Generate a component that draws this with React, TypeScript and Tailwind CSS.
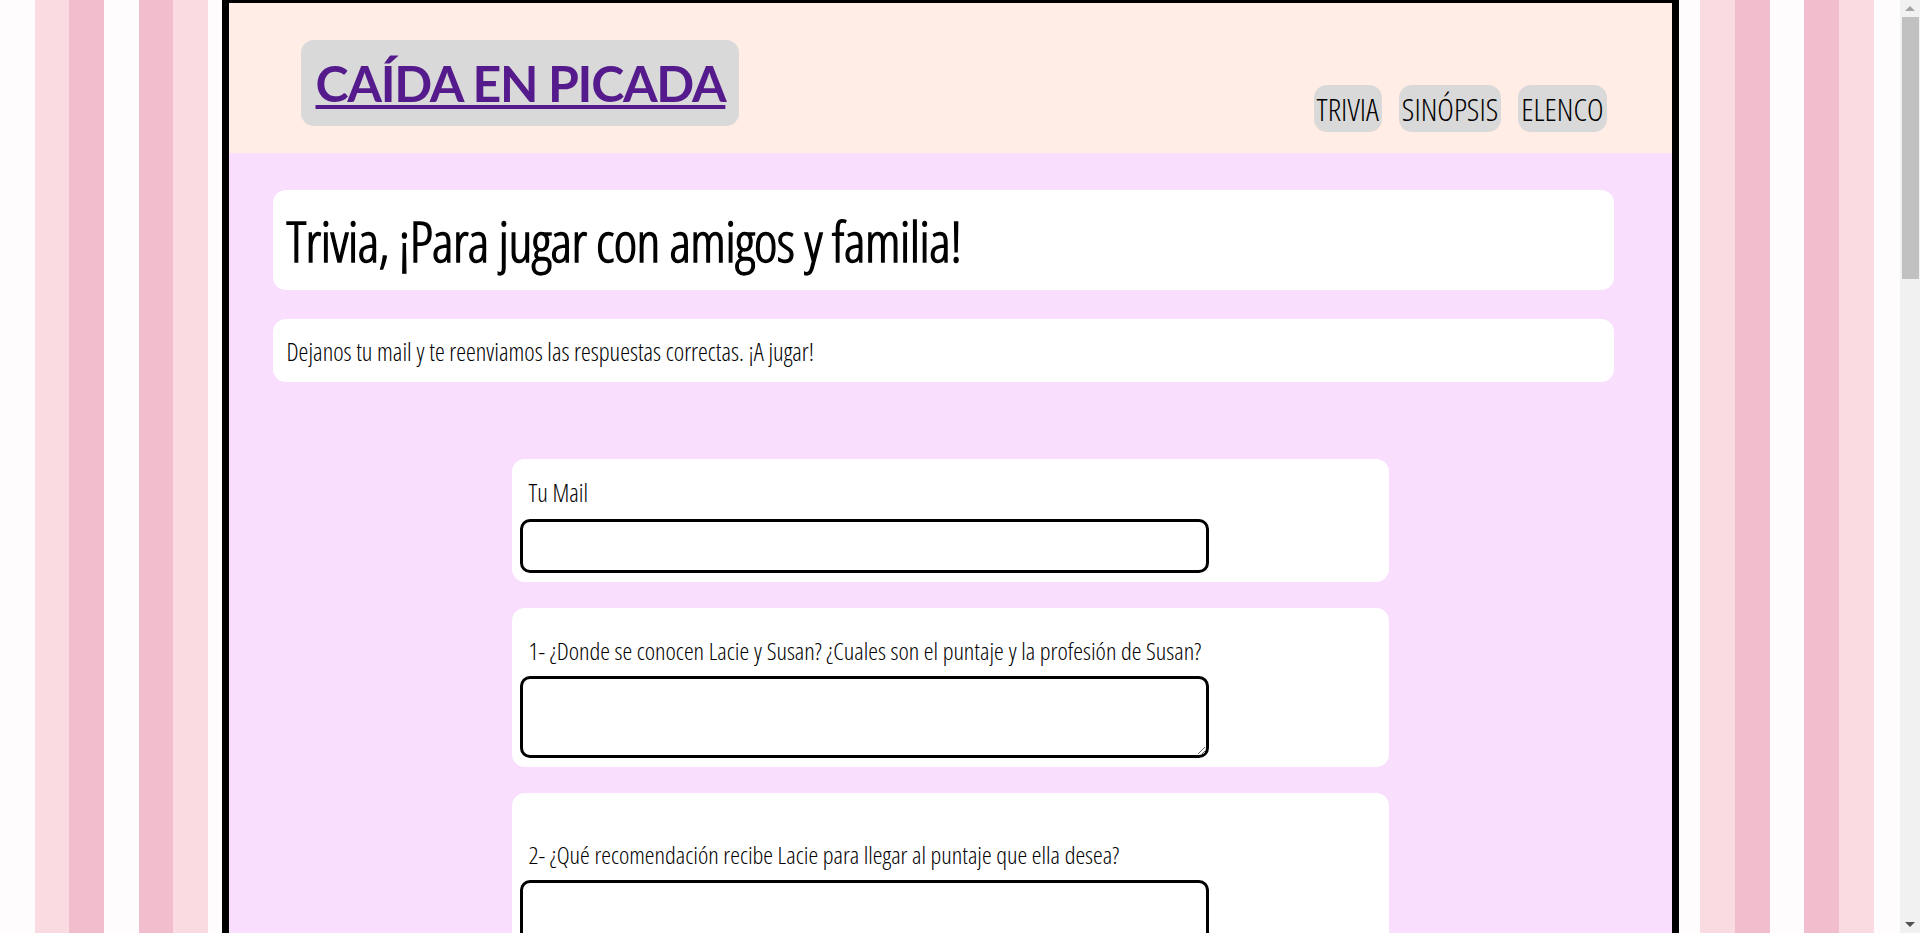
import React from "react";

function NavBtn({ label }: { label: string }) {
  return (
    <a className="rounded-[13px] bg-[#d9d9d9] px-[3px] py-[2px] text-[31.5px] font-light leading-[1.38] text-black [font-family:'Open_Sans',sans-serif] [font-stretch:75%]">
      {label}
    </a>
  );
}

function Scrollbar() {
  return (
    <div className="fixed right-0 top-0 flex h-screen w-[20px] flex-col items-center bg-[#f1f1f1]">
      <div className="flex h-[17px] w-full items-center justify-center">
        <div className="h-0 w-0 border-x-[5px] border-b-[5px] border-x-transparent border-b-[#a3a3a3]" />
      </div>
      <div className="h-[262px] w-[17px] bg-[#c1c1c1]" />
      <div className="flex-1" />
      <div className="flex h-[17px] w-full items-center justify-center">
        <div className="h-0 w-0 border-x-[5px] border-t-[5px] border-x-transparent border-t-[#505050]" />
      </div>
    </div>
  );
}

export default function App() {
  return (
    <div className="min-h-screen w-[1900px] bg-[repeating-linear-gradient(to_right,#fefcfd_0px,#fefcfd_34.7px,#fadbe2_34.7px,#fadbe2_69.4px,#f2bdcc_69.4px,#f2bdcc_104.1px,#fefcfd_104.1px,#fefcfd_138.8px,#f2bdcc_138.8px,#f2bdcc_173.5px,#fadbe2_173.5px,#fadbe2_208.2px)]">
      <div className="mx-auto w-[1457px] border-x-[7px] border-t-[3px] border-black">
        <header className="flex h-[150px] items-start justify-between bg-[#ffede6] pl-[72px] pr-[65px]">
          <div className="mt-[37px] flex h-[86px] items-center rounded-[13px] bg-[#d9d9d9] pl-[15px] pr-[14px]">
            <a className="whitespace-nowrap text-[50px] font-bold leading-none tracking-[-1.3px] text-[#551a8b] underline decoration-[4px] underline-offset-[3px] [font-family:Lato,sans-serif]">
              CAÍDA EN PICADA
            </a>
          </div>
          <nav className="mt-[82px] flex gap-[17px]">
            <NavBtn label="TRIVIA" />
            <NavBtn label="SINÓPSIS" />
            <NavBtn label="ELENCO" />
          </nav>
        </header>
        <main className="bg-[#f9defe] pb-[40px] pt-[37px] text-black [font-family:'Open_Sans',sans-serif] [font-stretch:75%]">
          <div className="ml-[44px] w-[1341px] rounded-[13px] bg-white px-[14px] py-[12px]">
            <h1 className="text-[56px] font-light leading-[1.362] tracking-[-0.012em] [-webkit-text-stroke:1.3px_black]">
              Trivia, ¡Para jugar con amigos y familia!
            </h1>
          </div>
          <div className="ml-[44px] mt-[29px] w-[1341px] rounded-[13px] bg-white px-[14px] pb-[13px] pt-[16px]">
            <p className="text-[24.8px] font-light leading-[1.37]">
              Dejanos tu mail y te reenviamos las respuestas correctas. ¡A jugar!
            </p>
          </div>
          <form className="mt-[77px] flex flex-col items-center gap-[26px]">
            <div className="w-[877px] rounded-[13px] bg-white px-[8px] pb-[9px] pt-[17px]">
              <label className="block px-[9px] text-[24.8px] font-light leading-[1.37]">Tu Mail</label>
              <input type="email" className="mt-[9px] block h-[54px] w-[689px] rounded-[10px] border-[3px] border-black bg-white" />
            </div>
            <div className="w-[877px] rounded-[13px] bg-white px-[8px] pb-[9px] pt-[26px]">
              <label className="block px-[9px] text-[24.6px] font-light leading-[1.38]">
                1- ¿Donde se conocen Lacie y Susan? ¿Cuales son el puntaje y la profesión de Susan?
              </label>
              <textarea className="mt-[8px] block h-[82px] w-[689px] rounded-[10px] border-[3px] border-black bg-white" />
            </div>
            <div className="w-[877px] rounded-[13px] bg-white px-[8px] pb-[9px] pt-[45px]">
              <label className="block px-[9px] text-[24.6px] font-light leading-[1.38]">
                2- ¿Qué recomendación recibe Lacie para llegar al puntaje que ella desea?
              </label>
              <textarea className="mt-[8px] block h-[82px] w-[689px] rounded-[10px] border-[3px] border-black bg-white" />
            </div>
          </form>
        </main>
      </div>
      <Scrollbar />
    </div>
  );
}
